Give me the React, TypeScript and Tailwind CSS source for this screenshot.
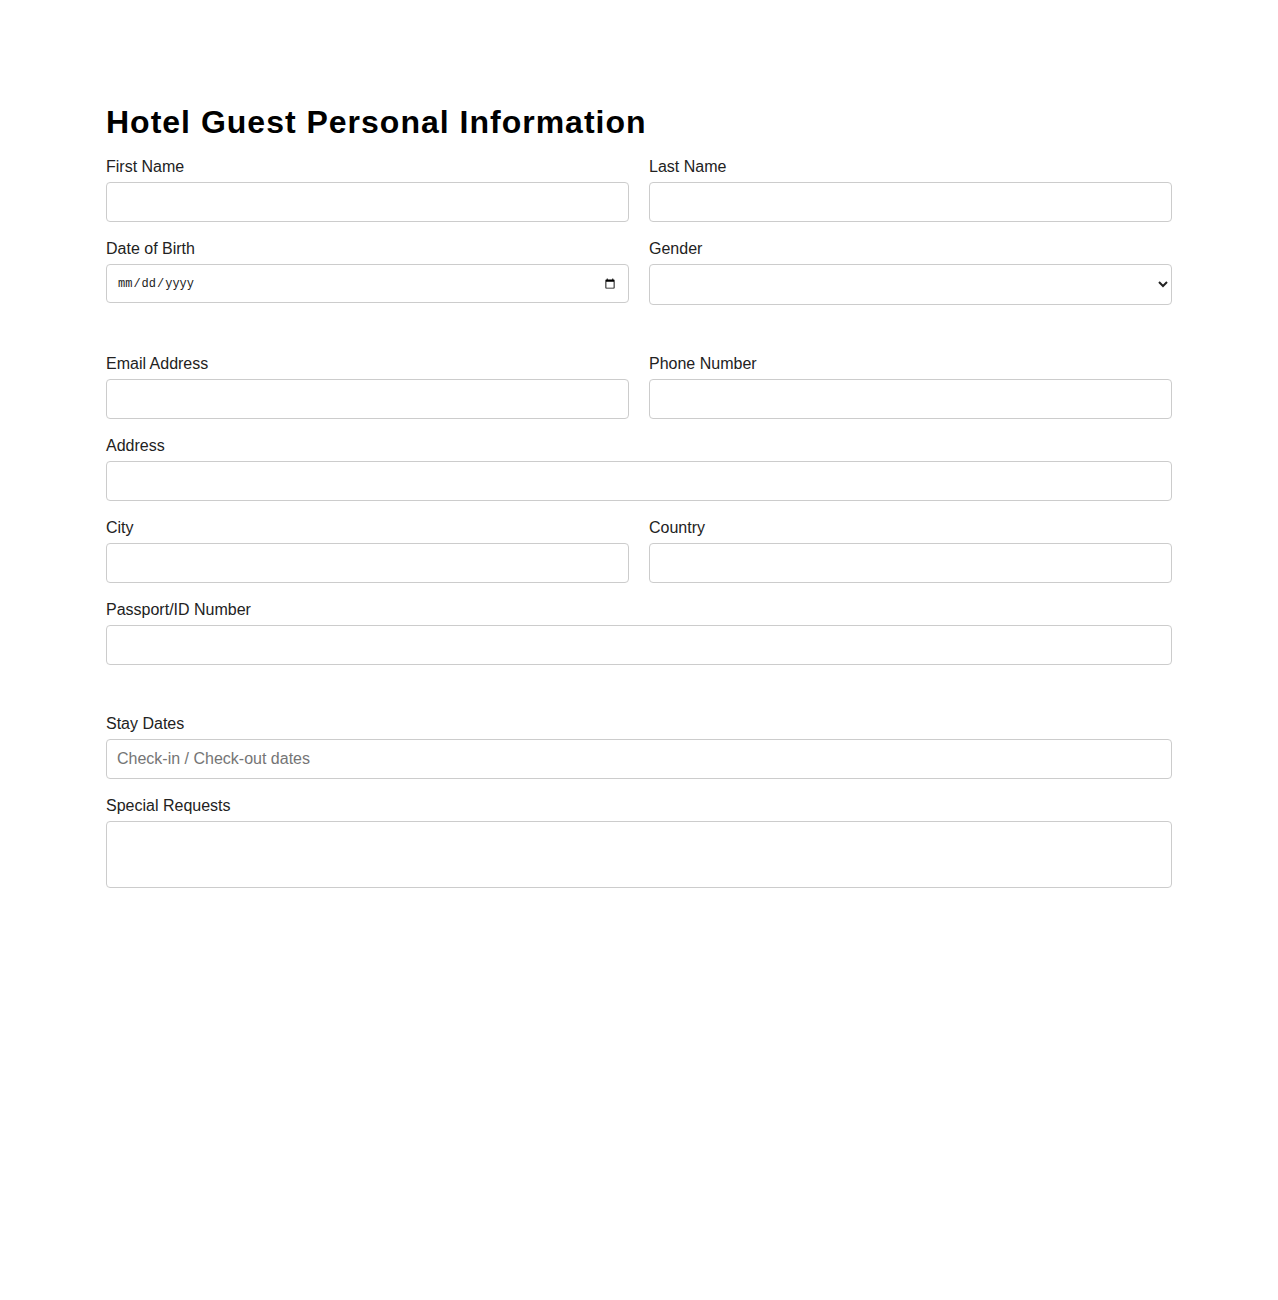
import React from "react";

// Guest registration form: personal details, contact info and stay details.

const labelCls = "block mb-[6px] text-[16px] leading-[18px] text-[#222]";
const boxCls =
    "block w-full px-[10px] border border-[#ccc] rounded-[4px] bg-white text-[#222] placeholder:text-[#757575] outline-none";
const inputCls = `${boxCls} h-[40px] text-[16px]`;

function Field({ label, children, className = "" }: { label: string; children: React.ReactNode; className?: string }) {
    return (
        <div className={className}>
            <label className={labelCls}>{label}</label>
            {children}
        </div>
    );
}

export default function App() {
    return (
        <div className="min-h-[1300px] bg-white font-['Liberation_Sans',Arial,sans-serif]">
            <form className="px-[106px] pt-[104px]">
                <h1 className="text-[32px] leading-[37px] font-bold tracking-[1px] text-black mb-[17px]">
                    Hotel Guest Personal Information
                </h1>

                {/* Personal */}
                <section className="grid grid-cols-2 gap-x-[20px] gap-y-[18px]">
                    <Field label="First Name">
                        <input type="text" className={inputCls} />
                    </Field>
                    <Field label="Last Name">
                        <input type="text" className={inputCls} />
                    </Field>
                    <Field label="Date of Birth">
                        <input type="date" className={`${boxCls} h-[39px] font-['Liberation_Mono',monospace] text-[12px]`} />
                    </Field>
                    <Field label="Gender">
                        <select className={`${boxCls} h-[41px] text-[16px]`} defaultValue="">
                            <option value=""></option>
                            <option>Male</option>
                            <option>Female</option>
                            <option>Other</option>
                        </select>
                    </Field>
                </section>

                {/* Contact */}
                <section className="mt-[50px] grid grid-cols-2 gap-x-[20px] gap-y-[18px]">
                    <Field label="Email Address">
                        <input type="email" className={inputCls} />
                    </Field>
                    <Field label="Phone Number">
                        <input type="tel" className={inputCls} />
                    </Field>
                    <Field label="Address" className="col-span-2">
                        <input type="text" className={inputCls} />
                    </Field>
                    <Field label="City">
                        <input type="text" className={inputCls} />
                    </Field>
                    <Field label="Country">
                        <input type="text" className={inputCls} />
                    </Field>
                    <Field label="Passport/ID Number" className="col-span-2">
                        <input type="text" className={inputCls} />
                    </Field>
                </section>

                {/* Stay */}
                <section className="mt-[50px] flex flex-col gap-[18px]">
                    <Field label="Stay Dates">
                        <input type="text" placeholder="Check-in / Check-out dates" className={inputCls} />
                    </Field>
                    <Field label="Special Requests">
                        <textarea className="block w-full h-[67px] px-[10px] py-[8px] border border-[#ccc] rounded-[4px] text-[16px] resize-none outline-none" />
                    </Field>
                </section>
            </form>
        </div>
    );
}
